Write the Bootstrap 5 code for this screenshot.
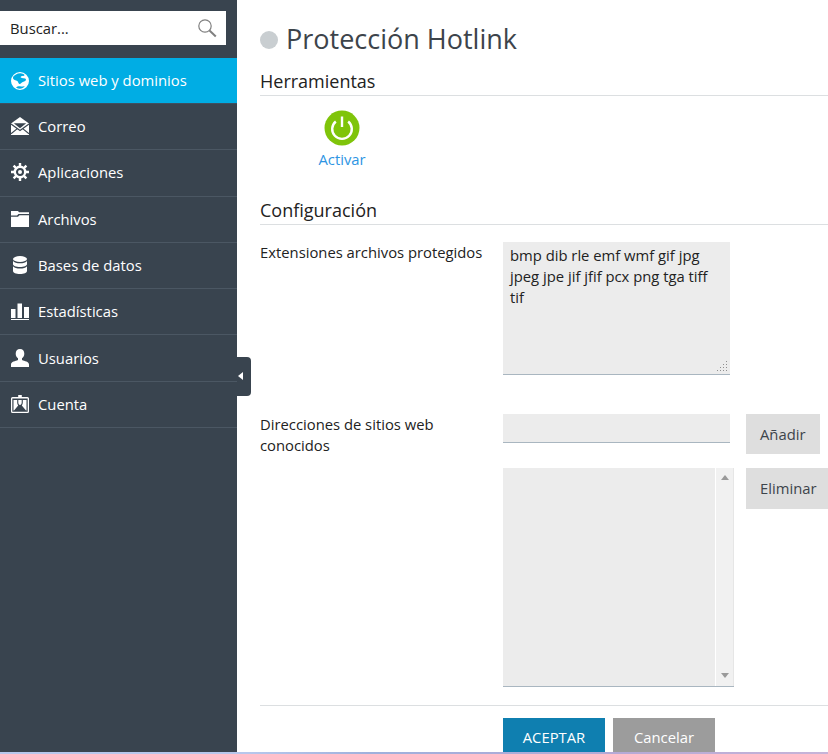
<!DOCTYPE html>
<html lang="es"><head><meta charset="utf-8"><title>Protección Hotlink</title>
<link href="https://cdn.jsdelivr.net/npm/bootstrap@5.3.0/dist/css/bootstrap.min.css" rel="stylesheet">
<style>
html,body{height:754px;overflow:hidden}
body{font-family:"Open Sans","Liberation Sans",sans-serif;font-size:14.8px;color:#222;background:#fff}
.shell{height:752px;position:relative}
.side{width:237px;flex:none;background:#39444f;padding-top:11px}
.searchbox{width:226px;height:34px;background:#fff;color:#222;padding-left:10px;padding-right:9px;font-size:14.8px}
.menu{margin-top:13px;list-style:none;padding:0}
.menu li{height:46.3px;border-bottom:1px solid #4b5763;color:#fff;font-size:14.8px;padding-left:11px;padding-bottom:1px;gap:9px}
.menu li.on{background:#00ade4;border-bottom-color:#3f5060;height:46px;padding-bottom:0}
.menu svg{width:18px;height:18px;flex:none;fill:#fff}
.toggle{position:absolute;left:237px;top:357px;width:14px;height:39px;background:#39444f;border-radius:0 4px 4px 0}
.toggle::after{content:"";position:absolute;left:1px;top:14px;border:4px solid transparent;border-right:5px solid #fff;border-left:0;margin-top:1px}
.mainpane{padding:0 0 0 23px;min-width:0}
.ptitle{height:58px;gap:8px;padding-top:20px}
.ptext{font-size:27px;font-weight:400;color:#3d444b;margin:0;line-height:38px}
.dot{width:18px;height:18px;border-radius:50%;background:#c9ced1;margin-top:2px}
.sect{font-size:18px;font-weight:400;color:#222;border-bottom:1px solid #dcdfe1;margin:0;height:38px;padding-top:11px;line-height:24px}
.tool{width:110px;margin-left:27px;margin-top:14px;height:77px;color:#2e95e3;text-decoration:none}
.tool span{margin-top:3px;line-height:20px}
.rowa{margin-top:17px}
.rowb{margin-top:39px}
.rowc{margin-top:14px}
.flabel{width:243px;flex:none;line-height:20.6px;color:#222}
.fta{width:227px;height:133px;background:#ececec;border-bottom:1px solid #a9b6c0;padding:3px 7px;font-size:14.8px;line-height:21px;color:#222;position:relative}
.grip{position:absolute;right:2px;bottom:3px;width:11px;height:11px}
.finput{width:227px;height:29px;background:#ececec;border-bottom:1px solid #a9b6c0;flex:none}
.lbtn{background:#dedede;color:#3d444b;height:40px;padding:0 14px;border:0;border-radius:0;font-size:14.8px;flex:none}
.gapa{margin-left:16px}
.gapb{margin-left:12px;height:41px}
.lbox{width:231px;height:219px;background:#ececec;border-bottom:1px solid #a9b6c0;flex:none}
.sbar{width:19px;margin-left:auto;background:#f1f1f1;border-left:1px solid #fff;border-right:1px solid #e6e6e6;position:relative}
.sbar::before,.sbar::after{content:"";position:absolute;left:5px;border:4px solid transparent}
.sbar::before{top:7px;border-bottom:5px solid #9a9a9a;border-top:0}
.sbar::after{bottom:8px;border-top:5px solid #9a9a9a;border-bottom:0}
.fhr{border-top:1px solid #dcdfe1;height:0;margin-top:18px}
.acts{margin-top:12px;margin-left:243px}
.abtn{width:102px;height:34px;border:0;border-radius:0;color:#fff;font-size:14.8px;padding:3px 0 0;line-height:28px}
.okb{background:#0f7fb0}.nob{background:#9c9c9c;margin-left:8px}
.okb:hover,.nob:hover{color:#fff}
.edge{height:2px;background:linear-gradient(90deg,#b7c7ec 0%,#b7c7ec 30%,#9fb0dc 45%,#b5a9d6 75%,#c7b4d8 100%)}
</style></head><body>
<div class="shell d-flex">
<nav class="side">
<div class="searchbox d-flex align-items-center justify-content-between"><span>Buscar...</span>
<svg width="20" height="20" viewBox="0 0 20 20" fill="none" stroke="#808080"><circle cx="8" cy="8" r="6.2" stroke-width="1.2"/><path d="M12.5 12.5l6.3 6" stroke-width="2"/></svg></div>
<ul class="menu">
<li class="on d-flex align-items-center"><svg viewBox="0 0 18 18"><path fill-rule="evenodd" d="M9 0a9 9 0 1 0 0 18A9 9 0 0 0 9 0zM5 2.500C7 1.200 10 1 12.500 2c1 .5 1.300 1.300.5 1.800-1 .6-2.700 0-3.300 1-.5 1 1.200 1.300 2.300 1.400 1.400.1 2.800 0 3 1.300.2 1.500-2.300 2.200-3.700 2.800-1.100.5-1.600 2-3 1.600-1.300-.5-.8-2.200-2-2.900-1.500-.9-4-1-4.300-2.800C1.700 4.500 3.500 3.400 5 2.500zM5 15.500c1.200-1.300 3-1.500 5-1.100 1.500.3 2.500-.6 3.800-.1-2 2.800-6 3.200-8.800 1.200z"/></svg>Sitios web y dominios</li>
<li class="d-flex align-items-center"><svg viewBox="0 0 18 18"><path d="M9 0l9 6.500V18H0V6.500z"/><path d="M2.800 6.300h12.400L9 11.300z" fill="#39444f"/><path d="M0 7l9 6.500L18 7M0 16.800l6.300-5.200M18 16.800l-6.300-5.200" fill="none" stroke="#39444f" stroke-width="1.200"/></svg>Correo</li>
<li class="d-flex align-items-center"><svg viewBox="0 0 18 18"><circle cx="9" cy="9" r="5.200" fill="none" stroke="#fff" stroke-width="2.400"/><circle cx="9" cy="9" r="2"/><path d="M9 0v3.500M9 14.500V18M0 9h3.500M14.500 9H18M2.600 2.600l2.500 2.500M12.900 12.900l2.500 2.500M2.600 15.400l2.500-2.500M12.900 5.100l2.500-2.500" stroke="#fff" stroke-width="2.400"/></svg>Aplicaciones</li>
<li class="d-flex align-items-center"><svg viewBox="0 0 18 18"><path d="M0 1h7l1 1.200h10V4H7.500L6 5.500H0z"/><path d="M0 6.800h7L8.500 5.300H18V17H0z"/></svg>Archivos</li>
<li class="d-flex align-items-center"><svg viewBox="0 0 18 18"><ellipse cx="9" cy="3" rx="7" ry="3"/><path d="M2 5c1 1.700 4 2.300 7 2.300s6-.6 7-2.300v3.200c0 1.500-3 2.700-7 2.700S2 9.700 2 8.200zM2 10.300c1 1.700 4 2.300 7 2.300s6-.6 7-2.300V15c0 1.700-3 3-7 3s-7-1.300-7-3z"/></svg>Bases de datos</li>
<li class="d-flex align-items-center"><svg viewBox="0 0 18 18"><path d="M0 7h4.500v9H0zM6.500 1.500H11V16H6.500zM13 5h5v11h-5zM0 17h18v1H0z"/></svg>Estadísticas</li>
<li class="d-flex align-items-center"><svg viewBox="0 0 18 18"><path d="M9 0c2.800 0 4.300 2 4.300 4.700 0 2-1 3.500-2.300 4.600V11c2.500 1.300 7 1.500 7 4.500V18H0v-2.500c0-3 4.500-3.200 7-4.500V9.300C5.700 8.200 4.700 6.700 4.700 4.700 4.700 2 6.200 0 9 0z"/></svg>Usuarios</li>
<li class="d-flex align-items-center"><svg viewBox="0 0 18 18"><path fill-rule="evenodd" d="M7.200 0h3.600v2h5.700A1.500 1.500 0 0 1 18 3.500v13a1.500 1.500 0 0 1-1.500 1.500h-15A1.500 1.500 0 0 1 0 16.500v-13A1.500 1.500 0 0 1 1.500 2h5.700zM1.300 3.500v13.200h15.400V3.500z"/><path d="M2.500 5h3.700v2.500c0 1.200.6 2.500 1 3L3 15.500H2.500zM15.500 5h-3.700v2.500c0 1.200-.6 2.500-1 3l4.200 5h.5zM7.300 5h3.400v2.500c0 1.200-.8 2.500-1.700 2.500S7.300 8.700 7.300 7.500z"/></svg>Cuenta</li>
</ul>
</nav>
<div class="toggle"></div>
<main class="mainpane flex-grow-1">
<div class="ptitle d-flex align-items-center"><span class="dot"></span><h1 class="ptext">Protección Hotlink</h1></div>
<h2 class="sect">Herramientas</h2>
<a class="tool d-flex flex-column align-items-center" href="#">
<svg width="36" height="36" viewBox="0 0 36 36"><circle cx="18" cy="18" r="17.500" fill="#7fc40a"/><path d="M11.800 11.500a9.800 9.800 0 1 0 12.400 0" fill="none" stroke="#fff" stroke-width="2.400"/><path d="M18 6.500V17" stroke="#fff" stroke-width="2.400"/></svg>
<span>Activar</span></a>
<h2 class="sect">Configuración</h2>
<div class="d-flex rowa"><div class="flabel">Extensiones archivos protegidos</div><div class="fta">bmp dib rle emf wmf gif jpg jpeg jpe jif jfif pcx png tga tiff tif
<svg class="grip" viewBox="0 0 11 11" fill="#8f8f8f"><path d="M9 1h1v1H9zM6 4h1v1H6zM9 4h1v1H9zM3 7h1v1H3zM6 7h1v1H6zM9 7h1v1H9zM0 10h1v1H0zM3 10h1v1H3zM6 10h1v1H6zM9 10h1v1H9z"/></svg></div></div>
<div class="d-flex rowb"><div class="flabel">Direcciones de sitios web conocidos</div>
<div class="flex-grow-1 overflow-hidden">
<div class="d-flex align-items-start"><div class="finput"></div><button class="btn lbtn gapa">Añadir</button></div>
<div class="d-flex align-items-start rowc"><div class="lbox d-flex"><div class="sbar"></div></div><button class="btn lbtn gapb">Eliminar</button></div>
</div></div>
<div class="fhr"></div>
<div class="d-flex acts"><button class="btn abtn okb">ACEPTAR</button><button class="btn abtn nob">Cancelar</button></div>
</main>
</div>
<div class="edge"></div>
</body></html>
